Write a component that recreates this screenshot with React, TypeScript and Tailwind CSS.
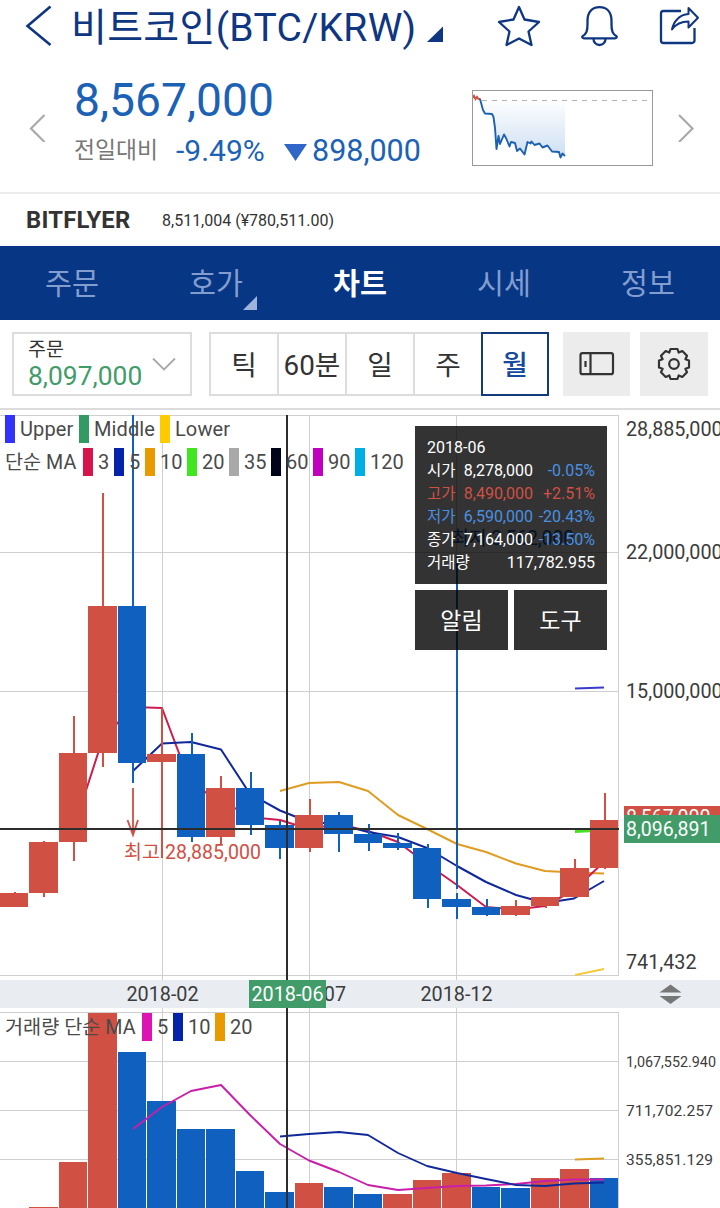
import { ReactNode } from "react";

import clsx from "clsx";

const UP = "#d05044";
const DOWN = "#1060c0";
const GRID = "#cfcfcf";

const STEP = 29.5;

type Candle = {
  up: boolean;
  top: number;
  bottom: number;
  high: number;
  low: number;
};

const candles: Candle[] = [
  { up: true, top: 893, bottom: 907, high: 892, low: 907 },
  { up: true, top: 842, bottom: 893, high: 841, low: 897 },
  { up: true, top: 753, bottom: 842, high: 716, low: 861 },
  { up: true, top: 606, bottom: 753, high: 493, low: 767 },
  { up: false, top: 606, bottom: 763, high: 415, low: 783 },
  { up: true, top: 754, bottom: 762, high: 708, low: 858 },
  { up: false, top: 754, bottom: 837, high: 733, low: 842 },
  { up: true, top: 788, bottom: 837, high: 776, low: 845 },
  { up: false, top: 788, bottom: 825, high: 772, low: 835 },
  { up: false, top: 825, bottom: 848, high: 821, low: 859 },
  { up: true, top: 815, bottom: 848, high: 799, low: 852 },
  { up: false, top: 815, bottom: 834, high: 812, low: 852 },
  { up: false, top: 834, bottom: 843, high: 824, low: 851 },
  { up: false, top: 843, bottom: 848, high: 833, low: 850 },
  { up: false, top: 848, bottom: 899, high: 844, low: 908 },
  { up: false, top: 899, bottom: 907, high: 893, low: 919 },
  { up: false, top: 907, bottom: 915, high: 899, low: 916 },
  { up: true, top: 906, bottom: 915, high: 900, low: 916 },
  { up: true, top: 897, bottom: 906, high: 897, low: 908 },
  { up: true, top: 868, bottom: 897, high: 859, low: 897 },
  { up: true, top: 820, bottom: 868, high: 793, low: 869 },
];

const volumes = [
  { up: true, top: 1208 },
  { up: true, top: 1207 },
  { up: true, top: 1162 },
  { up: true, top: 1013 },
  { up: false, top: 1052 },
  { up: false, top: 1101 },
  { up: false, top: 1129 },
  { up: false, top: 1129 },
  { up: false, top: 1171 },
  { up: false, top: 1192 },
  { up: true, top: 1183 },
  { up: false, top: 1187 },
  { up: false, top: 1194 },
  { up: true, top: 1194 },
  { up: true, top: 1180 },
  { up: true, top: 1173 },
  { up: false, top: 1187 },
  { up: false, top: 1188 },
  { up: true, top: 1178 },
  { up: true, top: 1169 },
  { up: false, top: 1178 },
];

// Snapped to whole pixels so bars keep a 1px gap
const barLeft = (i: number) => Math.floor(i * STEP);
const barWidth = (i: number) => barLeft(i + 1) - barLeft(i) - 1;
const wickX = (i: number) => Math.floor(i * STEP + 14);

const tooltipRows = [
  { label: "시가", value: "8,278,000", pct: "-0.05%", color: "text-white", pctColor: "text-[#4a90e0]" },
  { label: "고가", value: "8,490,000", pct: "+2.51%", color: "text-[#d05044]", pctColor: "text-[#d05044]" },
  { label: "저가", value: "6,590,000", pct: "-20.43%", color: "text-[#4a90e0]", pctColor: "text-[#4a90e0]" },
  { label: "종가", value: "7,164,000", pct: "-13.50%", color: "text-white", pctColor: "text-[#4a90e0]" },
];

function Header() {
  return (
    <header className="flex h-[54px] items-center pr-5 pl-6 text-[#0f3680]">
      <svg className="h-[54px] w-[30px]" viewBox="24 0 30 54" fill="none">
        <path d="M50.5 6.5 27.5 26 50.5 45" stroke="currentColor" strokeWidth="2.6" />
      </svg>
      <h1 className="ml-[17px] w-[346px] pt-px text-[39px] leading-[54px] tracking-[0.3px] whitespace-nowrap">
        비트코인(BTC/KRW)
      </h1>
      <svg className="ml-[10px] h-[54px] w-4" viewBox="427 0 16 54">
        <path d="M443 26.500V42H427z" fill="currentColor" />
      </svg>
      <svg
        className="ml-auto h-[54px] w-[205px]"
        viewBox="495 0 205 54"
        fill="none"
        stroke="currentColor"
        strokeWidth="2.3"
        strokeLinejoin="round"
      >
        <path d="m519 7 5.500 12.500 14.500 2.500-10.500 9.500 3 13.500-12.500-6.500-12.500 6.500 3-13.500-10.500-9.500 14.500-2.500z" />
        <path d="M582.500 36.200c4-2.200 5-5.200 5-12.200v-3c0-9 4.500-13.800 12-13.800s12 4.800 12 13.800v3c0 7 1 10 5 12.200.800 1-.200 2.100-1.500 2.100h-31c-1.300 0-2.300-1.100-1.500-2.100z" />
        <path d="M593.500 39a6 6 0 0 0 12 0" />
        <path d="M681 11h-17.500a2.500 2.500 0 0 0-2.500 2.500v27a2.500 2.500 0 0 0 2.500 2.500h28.500a2.500 2.500 0 0 0 2.500-2.500V28" />
        <path d="M672 29.500c1.500-8 7.500-15 16.500-15.500V8l9.500 9.700-9.500 9.800v-6c-7 0-13 3-16.500 8z" strokeWidth="2" />
      </svg>
    </header>
  );
}

function MiniChart() {
  const line =
    "M480 99l3 11 2 3.500 7 .5 1.500 3 1.500 11 1.500 21 2-13 1.500 8 4-9.500 2 3.500 3.500 8.500 1.500-4.500 4 1 2 8 3-2.500 4.500 6 3-12.500 3 1.500 1-2 3 3.500 5-1.500 3 4 5-2 4.500 6 7 .5 1.500 5.500 2-4 2.500 2.500";
  return (
    <svg className="h-[76px] w-[181px]" viewBox="472 90 181 76" fill="none">
      <defs>
        <linearGradient id="mini-fill" x1="0" y1="0" x2="0" y2="1">
          <stop offset="0" stopColor="#fff" />
          <stop offset="1" stopColor="#cddff2" />
        </linearGradient>
      </defs>
      <path d={`${line}V99z`} fill="url(#mini-fill)" />
      <path d="M482 100.500h170" stroke="#b5b5b5" strokeDasharray="5 5" strokeWidth="1" />
      <path d="m472.500 98 1.500-2 1.500 3 1.500-2 1.500 2h2" stroke={UP} strokeWidth="2" />
      <path d={line} stroke="#1c62b0" strokeWidth="1.900" strokeLinejoin="round" />
      <rect x="472.500" y="90.500" width="180" height="75" stroke="#999" />
    </svg>
  );
}

function Quote() {
  return (
    <section className="flex h-[140px] items-start border-b-2 border-[#ececec] pr-6 pl-[26px] text-[#1c62b4]">
      <svg className="mt-[60px] h-7 w-5 shrink-0" viewBox="26 114 20 28" fill="none">
        <path d="M44.500 115 31 128.500 44.500 142" stroke="#aaa" strokeWidth="2.200" />
      </svg>
      <div className="ml-7 w-[398px] shrink-0">
        <div className="mt-[19px] text-[46.2px] leading-[54px]">8,567,000</div>
        <div className="mt-[6px] flex h-9 items-center whitespace-nowrap">
          <span className="w-[102px] text-[22.8px] leading-9 text-[#777]">전일대비</span>
          <span className="w-[108px] text-[30px] leading-9">-9.49%</span>
          <svg className="mt-0.5 h-[17px] w-[23px]" viewBox="0 0 23 17">
            <path d="M0 0h23L11.500 17z" fill="#2f66c8" />
          </svg>
          <span className="ml-[5px] text-[30.5px] leading-9">898,000</span>
        </div>
      </div>
      <div className="mt-9 shrink-0">
        <MiniChart />
      </div>
      <svg className="mt-[60px] ml-[23px] h-7 w-5 shrink-0" viewBox="676 114 20 28" fill="none">
        <path d="M679 115 692.500 128.500 679 142" stroke="#aaa" strokeWidth="2.200" />
      </svg>
    </section>
  );
}

function Exchange() {
  return (
    <section className="flex h-[52px] items-center px-[25px] pt-0.5 text-[#333]">
      <span className="w-[137px] pl-px text-[23.8px] font-bold tracking-[0.2px]">BITFLYER</span>
      <span className="text-[16px]">8,511,004 (¥780,511.00)</span>
    </section>
  );
}

function Nav() {
  const tabs = ["주문", "호가", "차트", "시세", "정보"];
  return (
    <nav className="grid h-[74px] grid-cols-5 bg-[#073685]">
      {tabs.map((tab) => (
        <div
          key={tab}
          className={clsx(
            "relative text-center text-[29.3px] leading-[77px]",
            tab === "차트" ? "font-bold text-white" : "text-[#839dce]",
          )}
        >
          {tab}
          {tab === "호가" && (
            <svg className="absolute top-[50px] left-[99px] h-[14px] w-[14px]" viewBox="0 0 14 14">
              <path d="M14 0v14H0z" fill="#9fb4dc" />
            </svg>
          )}
        </div>
      ))}
    </nav>
  );
}

function Gear() {
  return (
    <svg
      className="h-9 w-9"
      viewBox="-18 -18 36 36"
      fill="none"
      stroke="#333"
      strokeWidth="2.200"
      strokeLinejoin="round"
    >
      <path d="M-3.500-15H3.500L4.700-11.400 8.300-13 13-8.300 11.400-4.700 15-3.500V3.500L11.400 4.700 13 8.300 8.300 13 4.700 11.400 3.500 15H-3.500L-4.700 11.400-8.300 13-13 8.300-11.400 4.700-15 3.500V-3.500L-11.400-4.700-13-8.300-8.300-13-4.700-11.400z" />
      <circle r="4.800" />
    </svg>
  );
}

function Toolbar() {
  const periods = ["틱", "60분", "일", "주", "월"];
  return (
    <section className="flex h-[90px] border-b-2 border-[#dcdcdc] px-3 pt-3 text-[#333]">
      <div className="flex h-16 w-[180px] items-center border-2 border-[#ddd] pl-[14px]">
        <div className="w-[124px]">
          <div className="text-[19.5px] leading-[27px]">주문</div>
          <div className="mb-[3px] text-[26.4px] leading-[26px] text-[#419c6a]">8,097,000</div>
        </div>
        <svg className="h-[14px] w-[24px]" viewBox="0 0 24 14" fill="none">
          <path d="m1 1.500 11 11 11-11" stroke="#a8a8a8" strokeWidth="1.800" />
        </svg>
      </div>
      <div className="ml-[17px] flex h-16 w-[340px]">
        {periods.map((period) => (
          <div
            key={period}
            className={clsx(
              "h-16 w-[68px] text-center text-[27.8px] leading-[64px] whitespace-nowrap",
              period === "월"
                ? "border-2 border-[#123a7d] font-medium text-[#164a9e]"
                : "border-y-2 border-l-2 border-[#ddd]",
            )}
          >
            {period}
          </div>
        ))}
      </div>
      <div className="ml-[14px] flex h-16 w-[67px] items-center justify-center bg-[#ececec]">
        <svg className="h-6 w-9" viewBox="0 0 36 24" fill="none" stroke="#333" strokeWidth="2.200">
          <rect x="1.500" y="1.200" width="32.500" height="21" rx="2" />
          <path d="M11.500 1.500v21M6.500 9v6" />
        </svg>
      </div>
      <div className="ml-[10px] flex h-16 w-[68px] items-center justify-center bg-[#ececec]">
        <Gear />
      </div>
    </section>
  );
}

type SwatchProps = {
  color: string;
  width?: string;
  children: ReactNode;
};

function Swatch({ color, width = "w-[42px]", children }: SwatchProps) {
  return (
    <span className={clsx("flex shrink-0 items-center gap-[5px]", width)}>
      <span className={clsx("h-7 w-[10px] shrink-0", color)} />
      {children}
    </span>
  );
}

function Tooltip() {
  return (
    <div className="absolute top-[16px] left-[415px] w-[192px] text-[16px] leading-[23px] text-white">
      <div className="h-[158px] bg-black/80 px-3 pt-[10px]">
        <div>2018-06</div>
        {tooltipRows.map((row) => (
          <div key={row.label} className={clsx("flex h-[23px]", row.color)}>
            <span className="w-9 pt-px text-[15.5px]">{row.label}</span>
            <span className="w-[70px] text-right">{row.value}</span>
            <span className={clsx("flex-1 text-right whitespace-nowrap", row.pctColor)}>
              {row.pct}
            </span>
          </div>
        ))}
        <div className="flex h-[23px] justify-between">
          <span className="pt-px text-[15.5px]">거래량</span>
          <span>117,782.955</span>
        </div>
      </div>
      <div className="mt-1.5 flex gap-1.5 text-center text-[23px] leading-[63px]">
        <div className="h-[60px] w-[93px] bg-black/80">알림</div>
        <div className="h-[60px] w-[93px] bg-black/80">도구</div>
      </div>
    </div>
  );
}

function PriceChart() {
  return (
    <section className="relative h-[570px]">
      <svg className="block h-[570px] w-[720px]" viewBox="0 410 720 570" fill="none">
        <path
          d="M0 415.500H619M0 552.500H619M0 691.500H619M0 975.500H619M162.500 415V980M309.500 415V980M456.500 415V980M618.500 415V975"
          stroke={GRID}
        />
        <g strokeWidth="2" strokeLinejoin="round">
          <path d="M575 688.500 604 687.500" stroke="#3a3ad0" />
          <path d="M575 975 604 969" stroke="#f3c93c" />
          <path d="M575 831.500 604 830" stroke="#48e024" strokeWidth="3" />
          <path
            d="M280 791 309 783 339 782 368 791 398 815 427 829 457 844 486 852 516 863.500 545 871 574 872.500 604 873.500"
            stroke="#e09c20"
          />
          <path
            d="M73.500 829 103 738 133 707 162 708 191 785 221 800 250 817 280 820 309 829 338 824 368 831 398 842 427 864 457 885 486 907 516 909.500 545 906 574 890 604 862"
            stroke="#cc1c50"
          />
          <path
            d="M133 771 162 743.500 191 742 221 749.500 250 794 280 810.500 309 822 338 824 368 832 398 837 427 848 457 866 486 882 516 895 545 903 574 898.500 604 881"
            stroke="#10289a"
          />
        </g>
        {candles.map((c, i) => (
          <g key={i} fill={c.up ? UP : DOWN}>
            <rect x={wickX(i)} y={c.high} width="2" height={c.low - c.high} />
            <rect x={barLeft(i)} y={c.top} width={barWidth(i)} height={c.bottom - c.top} />
          </g>
        ))}

        {/* High and low markers */}
        <path d="M133 788v46M127.500 820l5.500 15 5-15" stroke={UP} strokeWidth="1.800" />
        <text x="124" y="858.500" fill={UP} fontSize="19.500" textLength="137">
          최고 28,885,000
        </text>
        <path d="M457 557V889" stroke="#145cb0" strokeWidth="2" />
        <text x="451" y="545" fill={DOWN} fontSize="19.500" textLength="123">
          최저 3,562,000
        </text>

        <g fill="#3c3c3c" fontSize="19.800">
          <text x="626" y="436">28,885,000</text>
          <text x="626" y="559">22,000,000</text>
          <text x="626" y="698">15,000,000</text>
          <text x="626" y="969">741,432</text>
        </g>

        <rect x="624" y="806" width="96" height="30" fill={UP} />
        <text x="626" y="824" fill="#fff" fontSize="19.500">
          8,567,000
        </text>
        <path d="M0 829H619M287 415V980" stroke="#2c2c2c" strokeWidth="2" />
        <rect x="624" y="815" width="96" height="28" fill="#419c6a" />
        <text x="626" y="836" fill="#fff" fontSize="19.500">
          8,096,891
        </text>
      </svg>

      <div className="absolute top-[5px] left-[5px] text-[20px] leading-7 text-[#4a4a4a]">
        <div className="flex h-7 tracking-[0.1px]">
          <Swatch color="bg-[#3232fa]" width="w-[74px]">
            Upper
          </Swatch>
          <Swatch color="bg-[#349a64]" width="w-[81px]">
            Middle
          </Swatch>
          <Swatch color="bg-[#ffcc00]" width="w-[81px]">
            Lower
          </Swatch>
        </div>
        <div className="mt-[5px] flex h-7">
          <span className="w-[78px] shrink-0 pt-px text-[19.7px] whitespace-nowrap">단순 MA</span>
          <Swatch color="bg-[#d5144b]" width="w-[31px]">3</Swatch>
          <Swatch color="bg-[#0423a8]" width="w-[31px]">5</Swatch>
          <Swatch color="bg-[#e89a00]">10</Swatch>
          <Swatch color="bg-[#40e620]">20</Swatch>
          <Swatch color="bg-[#a9a9a9]">35</Swatch>
          <Swatch color="bg-[#000418]">60</Swatch>
          <Swatch color="bg-[#bf00bf]">90</Swatch>
          <Swatch color="bg-[#00aee6]">120</Swatch>
        </div>
      </div>
      <Tooltip />
    </section>
  );
}

function DateAxis() {
  return (
    <svg className="block h-7 w-[720px] bg-[#e9edf1]" viewBox="0 0 720 28">
      <g fill="#3c3c3c" fontSize="19.800" textAnchor="middle">
        <text x="162.500" y="21">2018-02</text>
        <text x="310" y="21">2018-07</text>
        <text x="456.500" y="21">2018-12</text>
      </g>
      <rect x="249" width="77" height="28" fill="#419c6a" />
      <text x="287.500" y="21" fill="#fff" fontSize="19.800" textAnchor="middle">
        2018-06
      </text>
      <path d="m670.500 4.500 11 8h-22zM659.500 16h22l-11 8z" fill="#777" />
    </svg>
  );
}

function VolumeChart() {
  return (
    <section className="relative h-[200px]">
      <svg className="block h-[200px] w-[720px]" viewBox="0 1008 720 200" fill="none">
        <path
          d="M0 1012.500H619M0 1061.500H619M0 1110.500H619M0 1159.500H619M162.500 1008V1208M309.500 1008V1208M456.500 1008V1208M618.500 1012V1208"
          stroke={GRID}
        />
        {volumes.map((v, i) => (
          <rect
            key={i}
            x={barLeft(i)}
            y={v.top}
            width={barWidth(i)}
            height={1208 - v.top}
            fill={v.up ? UP : DOWN}
          />
        ))}
        <g strokeWidth="1.900" strokeLinejoin="round">
          <path d="M575 1159.500 604 1158.500" stroke="#e09c20" />
          <path
            d="M133 1129 162 1107 191 1091 221 1085 250 1115 280 1144 309 1160.500 339 1172 368 1185 398 1190 427 1188 457 1186 486 1185.500 516 1184 545 1181 574 1179.500 604 1179.500"
            stroke="#c81ea8"
          />
          <path
            d="M280 1136.500 309 1134 339 1132 368 1135 398 1153 427 1166 457 1173 486 1179 516 1185 545 1186 574 1183.500 604 1182.500"
            stroke="#10289a"
          />
        </g>
        <path d="M287 1008V1208" stroke="#2c2c2c" strokeWidth="2" />
        <g fill="#3c3c3c" fontSize="15.500">
          <text x="626" y="1067" textLength="90" lengthAdjust="spacingAndGlyphs">
            1,067,552.940
          </text>
          <text x="626" y="1116" textLength="87">711,702.257</text>
          <text x="626" y="1165" textLength="87">355,851.129</text>
        </g>
      </svg>
      <div className="absolute top-[5px] left-[5px] flex h-7 text-[20px] leading-7 text-[#4a4a4a]">
        <span className="w-[137px] shrink-0 pt-px text-[19.7px] whitespace-nowrap">
          거래량 단순 MA
        </span>
        <Swatch color="bg-[#dc14b4]" width="w-[31px]">5</Swatch>
        <Swatch color="bg-[#0423a8]">10</Swatch>
        <Swatch color="bg-[#e89a00]">20</Swatch>
      </div>
    </section>
  );
}

export default function App() {
  return (
    <main className="h-[1208px] w-[720px] overflow-hidden bg-white font-[Roboto,'Noto_Sans_CJK_KR',sans-serif]">
      <Header />
      <Quote />
      <Exchange />
      <Nav />
      <Toolbar />
      <PriceChart />
      <DateAxis />
      <VolumeChart />
    </main>
  );
}
